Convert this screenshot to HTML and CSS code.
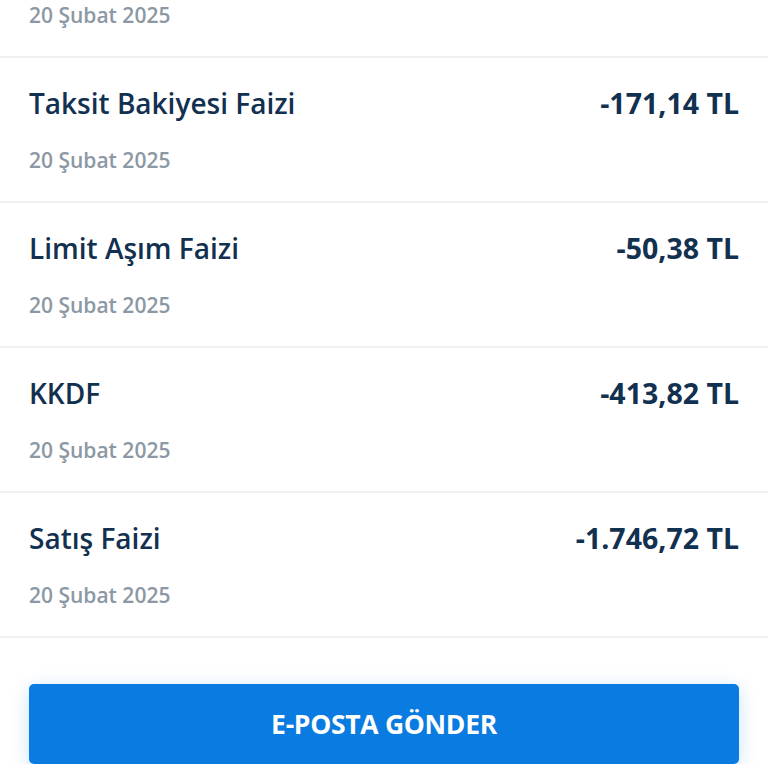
FILE: index.html
```html
<!DOCTYPE html>
<html lang="tr">
<head>
<meta charset="utf-8">
<link rel="stylesheet" href="styles.css">
</head>
<body>
<div class="list">
  <div class="row row-partial">
    <div class="date">20 Şubat 2025</div>
  </div>
  <div class="row">
    <div class="top"><span class="title">Taksit Bakiyesi Faizi</span><span class="amount">-171,14 TL</span></div>
    <div class="date">20 Şubat 2025</div>
  </div>
  <div class="row">
    <div class="top"><span class="title">Limit Aşım Faizi</span><span class="amount">-50,38 TL</span></div>
    <div class="date">20 Şubat 2025</div>
  </div>
  <div class="row">
    <div class="top"><span class="title">KKDF</span><span class="amount">-413,82 TL</span></div>
    <div class="date">20 Şubat 2025</div>
  </div>
  <div class="row">
    <div class="top"><span class="title">Satış Faizi</span><span class="amount">-1.746,72 TL</span></div>
    <div class="date">20 Şubat 2025</div>
  </div>
</div>
<div class="actions">
  <button class="btn">E-POSTA GÖNDER</button>
</div>
</body>
</html>
```
FILE: styles.css
```css
html, body {
  margin: 0;
  padding: 0;
  background: #ffffff;
  font-family: "Open Sans", "Noto Sans", sans-serif;
  overflow: hidden;
}
.list {
  display: flex;
  flex-direction: column;
}
.row {
  height: 143px;
  padding: 0 29px 0;
  border-bottom: 2px solid #eff0f2;
  display: flex;
  flex-direction: column;
}
.row-partial {
  height: 56px;
  justify-content: flex-start;
}
.row-partial .date {
  margin-top: -3px;
}
.top {
  display: flex;
  justify-content: space-between;
  align-items: center;
  margin-top: 27px;
  height: 36px;
}
.title {
  font-size: 28px;
  font-weight: 600;
  color: #12304f;
}
.amount {
  font-size: 28.5px;
  font-weight: 700;
  color: #12304f;
}
.date {
  margin-top: 21px;
  font-size: 21px;
  line-height: 36px;
  font-weight: 600;
  color: #8c98a4;
}
.actions {
  padding: 46px 29px 0;
}
.btn {
  display: block;
  width: 100%;
  height: 80px;
  border: none;
  border-radius: 5px;
  background: #0a7be0;
  color: #ffffff;
  font-family: "Open Sans", "Noto Sans", sans-serif;
  font-size: 26.5px;
  font-weight: 700;
  letter-spacing: -0.3px;
  box-shadow: 0 4px 18px rgba(10, 123, 224, 0.22);
}
```
